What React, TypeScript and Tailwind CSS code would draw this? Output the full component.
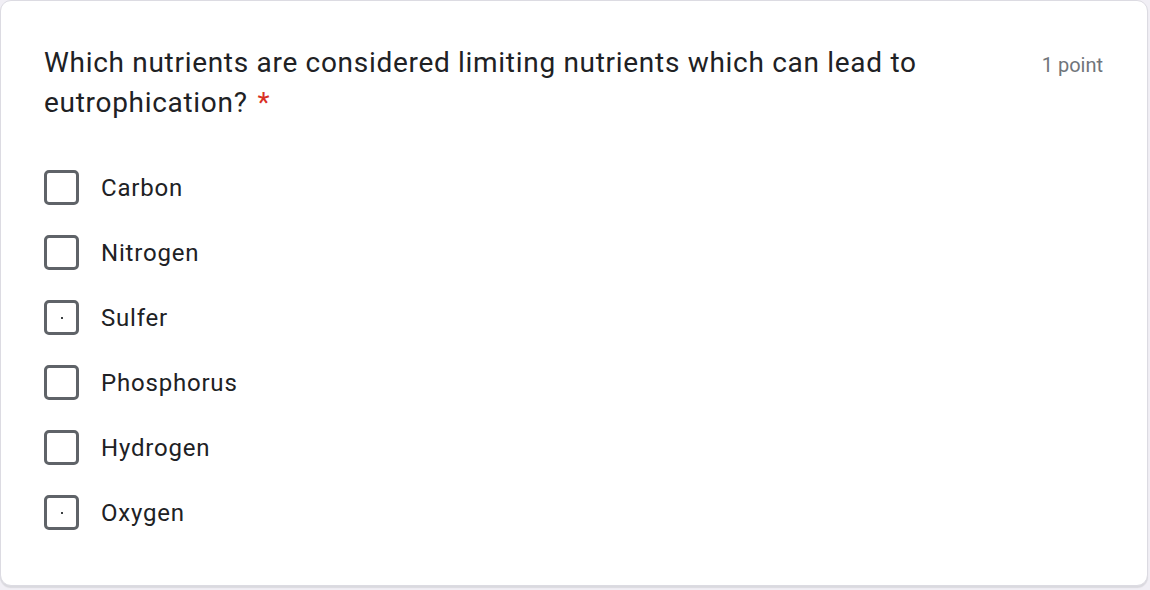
const options = [
  { label: 'Carbon', dot: false },
  { label: 'Nitrogen', dot: false },
  { label: 'Sulfer', dot: true },
  { label: 'Phosphorus', dot: false },
  { label: 'Hydrogen', dot: false },
  { label: 'Oxygen', dot: true },
];

function CheckBox({ dot }: { dot: boolean }) {
  return (
    <div className="flex h-[35px] w-[35px] shrink-0 items-center justify-center rounded-[5px] border-[3.5px] border-[#5f6368] bg-white">
      {dot && <div className="h-[2px] w-[2px] bg-[#3c4043]" />}
    </div>
  );
}

export default function App() {
  return (
    <div className="h-[590px] w-[1150px] bg-[#f1eff5] font-['Roboto',sans-serif]">
      <div className="flex h-[586px] w-[1148px] flex-col rounded-[11px] border border-[#dcdbe2] bg-white pl-[43px] pr-[44px] pt-[42px] shadow-[0_2px_1px_rgba(60,64,67,0.12)]">
        <div className="flex items-start justify-between">
          <h1 className="w-[930px] text-[28px] leading-[40px] tracking-[0.7px] text-[#202124]">
            Which nutrients are considered limiting nutrients which can lead to eutrophication?
            <span className="ml-[10px] text-[#d93025]">*</span>
          </h1>
          <span className="pt-[10px] text-[20px] leading-[24px] text-[#70757a]">1 point</span>
        </div>
        <div className="mt-[47px] flex flex-col gap-[30px]">
          {options.map((o) => (
            <label key={o.label} className="flex h-[35px] items-center gap-[22px]">
              <CheckBox dot={o.dot} />
              <span className="text-[24px] tracking-[0.8px] text-[#202124]">{o.label}</span>
            </label>
          ))}
        </div>
      </div>
    </div>
  );
}
